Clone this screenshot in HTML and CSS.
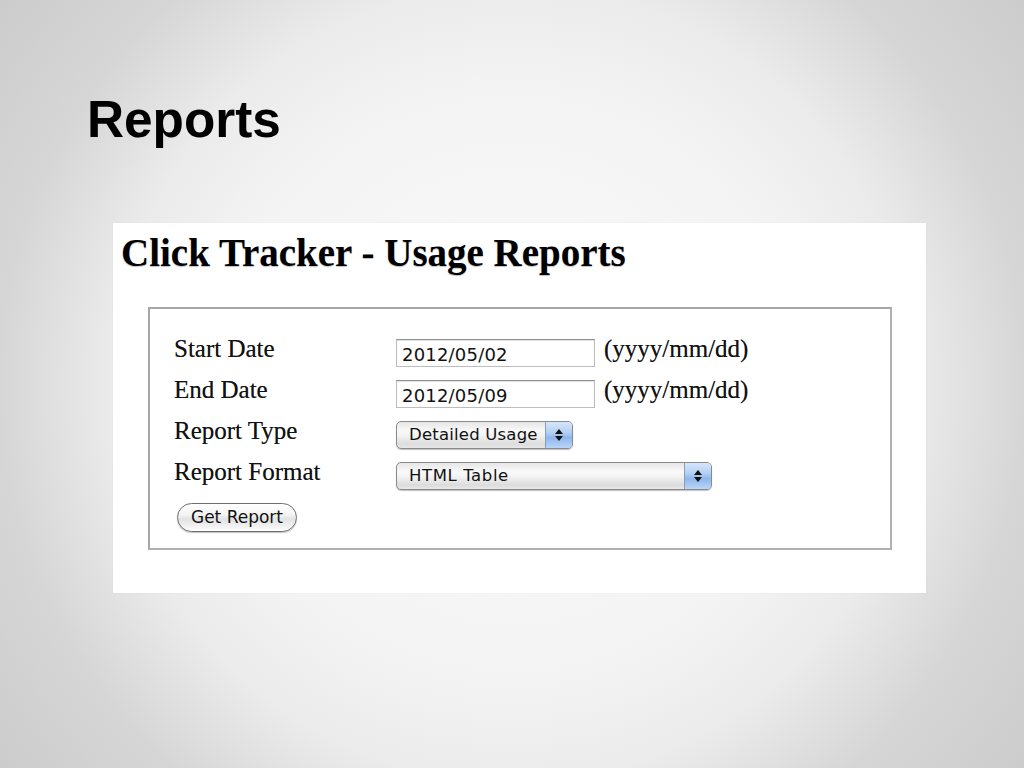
FILE: index.html
```html
<!DOCTYPE html>
<html lang="en">
<head>
<meta charset="utf-8">
<title>Reports</title>
<link rel="stylesheet" href="styles.css">
</head>
<body>
<main class="slide">
  <h1 class="title">Reports</h1>
  <section class="panel">
    <h2 class="heading">Click Tracker - Usage Reports</h2>
    <form class="box">
      <div class="grid">
        <label class="lbl">Start Date</label>
        <div class="ctrl">
          <input class="field" type="text" value="2012/05/02">
          <span class="hint">(yyyy/mm/dd)</span>
        </div>
        <label class="lbl">End Date</label>
        <div class="ctrl">
          <input class="field" type="text" value="2012/05/09">
          <span class="hint">(yyyy/mm/dd)</span>
        </div>
        <label class="lbl">Report Type</label>
        <div class="ctrl">
          <div class="sel sel-type">
            <span class="sel-text">Detailed Usage</span>
            <span class="sel-arrow"><svg width="10" height="14" viewBox="0 0 10 14"><path d="M5 1 L9 6 L1 6 Z" fill="#111"/><path d="M1 8 L9 8 L5 13 Z" fill="#111"/></svg></span>
          </div>
        </div>
        <label class="lbl">Report Format</label>
        <div class="ctrl">
          <div class="sel sel-format">
            <span class="sel-text">HTML Table</span>
            <span class="sel-arrow"><svg width="10" height="14" viewBox="0 0 10 14"><path d="M5 1 L9 6 L1 6 Z" fill="#111"/><path d="M1 8 L9 8 L5 13 Z" fill="#111"/></svg></span>
          </div>
        </div>
        <div class="btn-cell">
          <button class="btn" type="button">Get Report</button>
        </div>
      </div>
    </form>
  </section>
</main>
</body>
</html>
```
FILE: styles.css
```css
html, body {
  margin: 0;
  padding: 0;
}
body {
  width: 1024px;
  height: 768px;
  overflow: hidden;
  background: radial-gradient(circle at 50% 50%, #fbfbfb 0px, #f3f3f3 300px, #ebebeb 400px, #d6d6d6 512px, #cccccc 640px);
}
.slide {
  padding-top: 95px;
}
.title {
  margin: 0 0 78px 87px;
  font-family: "Liberation Sans", Arial, sans-serif;
  font-weight: bold;
  font-size: 51.3px;
  line-height: 50px;
  color: #000;
}
.panel {
  margin-left: 113px;
  width: 813px;
  height: 370px;
  box-sizing: border-box;
  background: #fff;
  padding: 10px 0 0 8px;
  box-shadow: 0 0 1px rgba(0,0,0,0.08);
}
.heading {
  margin: 0 0 35px 0;
  font-family: "Liberation Serif", "Times New Roman", serif;
  font-weight: bold;
  font-size: 39px;
  line-height: 39px;
  color: #000;
  text-shadow: 0 1px 1px rgba(0,0,0,0.25);
}
.box {
  margin: 0 0 0 27px;
  width: 744px;
  box-sizing: border-box;
  border: 2px solid #b0b0b0;
  border-color: #a6a6a6 #b0b0b0 #b0b0b0 #a6a6a6;
  padding: 30px 0 17px 24px;
}
.grid {
  display: grid;
  grid-template-columns: 222px 1fr;
  grid-auto-rows: 28px;
  row-gap: 13px;
}
.lbl {
  align-self: start;
  font-family: "Liberation Serif", "Times New Roman", serif;
  font-size: 25px;
  line-height: 20px;
  color: #111;
  white-space: nowrap;
  text-shadow: 0 0 0.4px rgba(0,0,0,0.5);
}
.ctrl {
  display: flex;
  align-items: flex-start;
  gap: 9px;
}
.field {
  box-sizing: border-box;
  width: 199px;
  height: 28px;
  margin: 0;
  padding: 3px 5px 0 5px;
  border: 1px solid #bdbdbd;
  border-top-color: #8e8e8e;
  box-shadow: inset 0 1px 1px rgba(0,0,0,0.12);
  font-family: "DejaVu Sans", Verdana, sans-serif;
  font-size: 18px;
  letter-spacing: 0.2px;
  color: #111;
  background: #fff;
  outline: none;
}
.hint {
  font-family: "Liberation Serif", "Times New Roman", serif;
  font-size: 25px;
  line-height: 20px;
  color: #111;
  white-space: nowrap;
  text-shadow: 0 0 0.4px rgba(0,0,0,0.5);
}
.sel {
  box-sizing: border-box;
  height: 28px;
  display: flex;
  align-items: stretch;
  border: 1px solid #8a8a8a;
  border-radius: 5px;
  overflow: hidden;
  background: linear-gradient(to bottom, #e6e6e6 0%, #f9f9f9 35%, #f1f1f1 55%, #dcdcdc 85%, #e8e8e8 100%);
  box-shadow: 0 1px 1px rgba(0,0,0,0.25);
}
.sel-type { width: 177px; }
.sel-format { width: 316px; }
.sel-text {
  flex: 1;
  padding-left: 12px;
  font-family: "DejaVu Sans", Verdana, sans-serif;
  font-size: 16.5px;
  letter-spacing: 0.2px;
  line-height: 26px;
  color: #111;
  white-space: nowrap;
}
.sel-format .sel-text {
  letter-spacing: 0.6px;
}
.sel-arrow {
  width: 26px;
  display: flex;
  align-items: center;
  justify-content: center;
  border-left: 1px solid #8a9cb8;
  background: linear-gradient(to bottom, #d6e6fa 0%, #b4d0f3 40%, #8fb7ec 60%, #b8d6f8 100%);
}
.btn-cell {
  grid-column: 1 / span 2;
}
.btn {
  box-sizing: border-box;
  margin: 0 0 0 3px;
  width: 120px;
  height: 29px;
  padding: 0;
  border: 1px solid #6e6e6e;
  border-radius: 15px;
  background: linear-gradient(to bottom, #ffffff 0%, #f4f4f4 40%, #e2e2e2 55%, #f3f3f3 85%, #ffffff 100%);
  box-shadow: 0 1px 1px rgba(0,0,0,0.25);
  font-family: "DejaVu Sans", Verdana, sans-serif;
  font-size: 17px;
  line-height: 27px;
  color: #111;
  text-align: center;
}
```
